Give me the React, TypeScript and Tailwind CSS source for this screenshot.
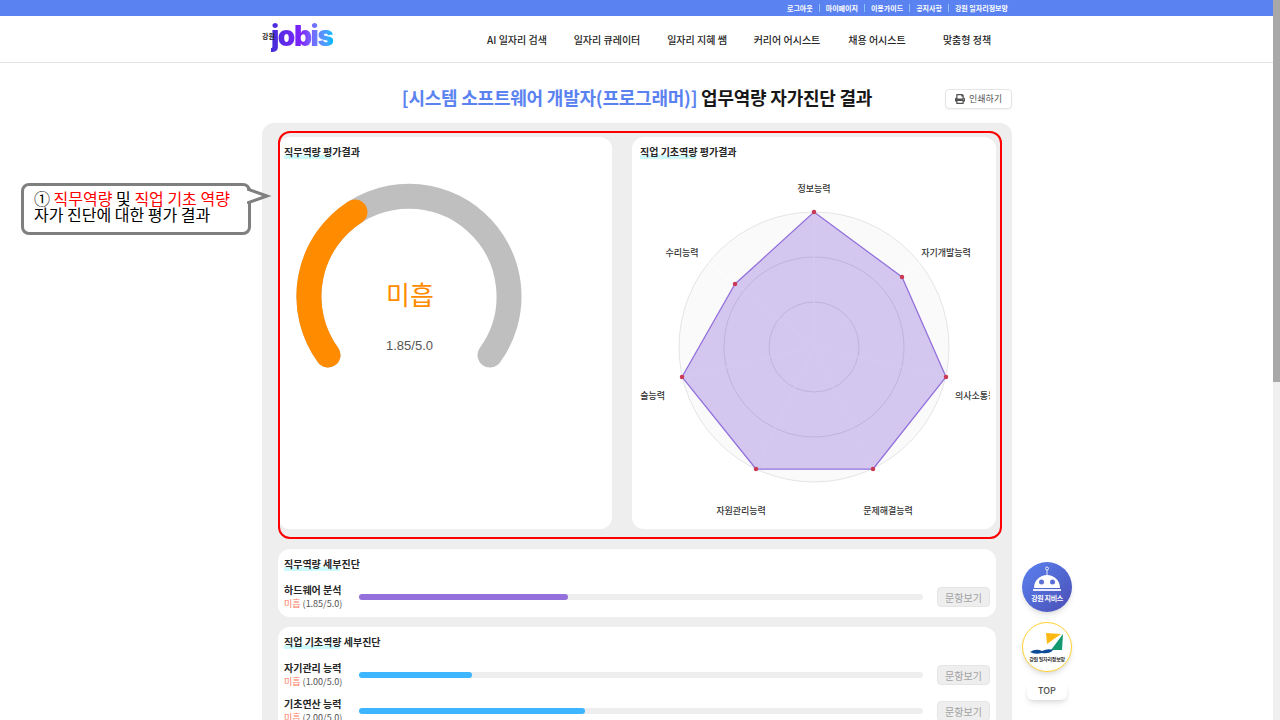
import { FaPrint } from "react-icons/fa";

const topLinks = ["로그아웃", "마이페이지", "이용가이드", "공지사항", "강원 일자리정보망"];
const navItems = ["AI 일자리 검색", "일자리 큐레이터", "일자리 지혜 쌤", "커리어 어시스트", "채용 어시스트", "맞춤형 정책"];

const radarPoints = [
  [814, 212],
  [902, 277],
  [946, 377],
  [873, 469],
  [756, 469],
  [682, 377],
  [735, 284],
];

const radarLabels = [
  { text: "정보능력", x: 814, y: 189, anchor: "middle" },
  { text: "자기개발능력", x: 946, y: 253, anchor: "middle" },
  { text: "의사소통능력", x: 955, y: 396, anchor: "start" },
  { text: "문제해결능력", x: 888, y: 511, anchor: "middle" },
  { text: "자원관리능력", x: 741, y: 511, anchor: "middle" },
  { text: "기술능력", x: 665, y: 396, anchor: "end" },
  { text: "수리능력", x: 682, y: 253, anchor: "middle" },
];

// 7 axes around the centre of the radar chart
const axisEnds = Array.from({ length: 7 }, (_, i) => {
  const a = (i * 2 * Math.PI) / 7;
  return [814 + 135 * Math.sin(a), 347 - 135 * Math.cos(a)];
});

function SectionTitle({ children, mark }: { children: string; mark: string }) {
  return (
    <h3 className="relative h-3.5 text-[10px] leading-3.5 font-bold text-neutral-800">
      <span className={`absolute bottom-0 left-0 h-1 bg-cyan-100 ${mark}`} />
      <span className="relative">{children}</span>
    </h3>
  );
}

function ScoreRow({ name, score, percent, color }: { name: string; score: string; percent: number; color: string }) {
  return (
    <div className="flex items-center">
      <div className="w-[75px] shrink-0">
        <p className="text-[10px] leading-3.5 font-bold text-neutral-800">{name}</p>
        <p className="text-[9px] leading-3.5 text-neutral-600">
          <span className="text-[#ff7a5c]">미흡</span> ({score})
        </p>
      </div>
      <div className="h-1.5 flex-1 rounded-full bg-[#eeeeee]">
        <div className={`h-full rounded-full ${color}`} style={{ width: `${percent}%` }} />
      </div>
      <button className="ml-3.5 h-5 w-[53px] shrink-0 rounded-sm border border-neutral-200 bg-[#eeeeee] text-[10px] text-neutral-400">
        문항보기
      </button>
    </div>
  );
}

function Gauge() {
  return (
    <svg viewBox="0 0 226 186" className="mt-6 ml-3 h-[186px] w-[226px]">
      <path d="M32 172 A100 100 0 1 1 194 172" fill="none" stroke="#bfbfbf" strokeWidth="25" strokeLinecap="round" />
      <path d="M32 172 A100 100 0 0 1 59 29" fill="none" stroke="#ff8c00" strokeWidth="25" strokeLinecap="round" />
      <text x="114" y="122" textAnchor="middle" fontSize="26" fill="#ff8c00">
        미흡
      </text>
      <text x="113.5" y="167" textAnchor="middle" fontSize="13" fill="#555555" fontFamily="'Liberation Sans', sans-serif">
        1.85/5.0
      </text>
    </svg>
  );
}

function Radar() {
  return (
    <svg viewBox="640 171 350 350" className="mt-3 h-[350px] w-[350px]">
      <circle cx="814" cy="347" r="135" fill="#fafafa" stroke="#e5e5e5" />
      <circle cx="814" cy="347" r="90" fill="none" stroke="#dcdcdc" />
      <circle cx="814" cy="347" r="45" fill="none" stroke="#dcdcdc" />
      {axisEnds.map(([x, y]) => (
        <line key={x} x1="814" y1="347" x2={x} y2={y} stroke="#ffffff" />
      ))}
      <polygon
        points={radarPoints.map((p) => p.join(",")).join(" ")}
        fill="#9370db"
        fillOpacity="0.37"
        stroke="#9370db"
        strokeWidth="1.25"
      />
      {radarPoints.map(([x, y]) => (
        <circle key={x} cx={x} cy={y} r="2.25" fill="#c93a55" />
      ))}
      {radarLabels.map((l) => (
        <text
          key={l.text}
          x={l.x}
          y={l.y + 3}
          textAnchor={l.anchor as "middle" | "start" | "end"}
          fontSize="9"
          fontWeight="500"
          fill="#333333"
        >
          {l.text}
        </text>
      ))}
    </svg>
  );
}

function Callout() {
  return (
    <div className="absolute top-[183px] left-[21px] h-[52px] w-[230px] rounded-lg border-[3px] border-[#7f7f7f] bg-white pt-1 pl-2.5 text-base leading-4 text-black">
      <svg viewBox="0 0 26 18" className="absolute top-0 -right-[25px] h-[18px] w-[26px]">
        <path d="M0 3 L20 10 L0 17" fill="#ffffff" stroke="#7f7f7f" strokeWidth="3" />
      </svg>
      <p>
        ① <span className="text-[#ff0000]">직무역량</span> 및 <span className="text-[#ff0000]">직업 기초 역량</span>
      </p>
      <p>자가 진단에 대한 평가 결과</p>
    </div>
  );
}

function FloatingMenu() {
  return (
    <div className="absolute top-[562px] left-[1022px] flex w-[50px] flex-col items-center gap-2.5">
      <div className="flex size-[50px] flex-col items-center rounded-full bg-gradient-to-br from-[#5a82f0] to-[#4a4fb5] pt-1 shadow-md">
        <svg viewBox="0 0 34 26" className="h-[26px] w-[34px]">
          <circle cx="17" cy="2.5" r="1.5" fill="none" stroke="#e8ecff" />
          <line x1="17" y1="4" x2="17" y2="9" stroke="#e8ecff" />
          <path d="M4 22 A13 13 0 0 1 30 22 Z" fill="#ffffff" />
          <rect x="3" y="23" width="28" height="2" fill="#e8ecff" />
          <circle cx="11.5" cy="16" r="2.5" fill="#5a6fd8" />
          <circle cx="22.5" cy="16" r="2.5" fill="#5a6fd8" />
        </svg>
        <span className="text-[7px] leading-3 font-bold tracking-tighter text-white">강원 지비스</span>
      </div>
      <div className="flex size-[50px] flex-col items-center rounded-full border border-amber-300 bg-white pt-1.5 shadow-md">
        <svg viewBox="0 0 38 26" className="h-[26px] w-[38px]">
          <path d="M18 4 L33 5 L19 15 Z" fill="#fdb913" />
          <path d="M35 5 L34 21 L23 21 Z" fill="#12996f" />
          <path d="M2 23 Q8 19 14 22 Q20 19 25 21 Q22 25 14 24 Q7 26 2 23 Z" fill="#0b4a96" />
        </svg>
        <span className="text-[5px] leading-2 font-medium tracking-tighter text-black">강원 일자리정보망</span>
      </div>
      <div className="flex h-[18px] w-10 items-center justify-center rounded-md bg-white text-[9px] font-medium text-neutral-600 shadow-md">
        TOP
      </div>
    </div>
  );
}

export default function App() {
  return (
    <div className="relative flex h-screen overflow-hidden bg-white font-['Noto_Sans_CJK_KR','Noto_Sans',sans-serif]">
      <div className="flex-1">
        <div className="h-4 bg-[#5a82f0]">
          <ul className="ml-[262px] flex h-full w-[750px] items-center justify-end pr-1 text-[7px] font-bold text-white">
            {topLinks.map((link, i) => (
              <li key={link} className={i > 0 ? "ml-1.5 border-l border-blue-300 pl-1.5 leading-2" : "leading-2"}>
                {link}
              </li>
            ))}
          </ul>
        </div>

        <header className="h-[47px] border-b border-neutral-200">
          <div className="ml-[262px] flex h-full w-[750px] items-center justify-between">
            <div className="flex items-center pb-1.5">
              <span className="relative z-10 text-[7px] font-bold text-neutral-800">강원</span>
              <span className="-ml-1 bg-gradient-to-r from-indigo-700 via-violet-600 to-sky-400 bg-clip-text font-['Inter',sans-serif] text-[28px] leading-8 font-black tracking-tighter text-transparent">
                jobis
              </span>
            </div>
            <nav className="grid w-[540px] grid-cols-6 text-center text-[10px] font-medium text-neutral-800">
              {navItems.map((item) => (
                <a key={item}>{item}</a>
              ))}
            </nav>
          </div>
        </header>

        <main className="ml-[262px] w-[750px]">
          <div className="mt-6 mb-3 grid h-6 grid-cols-[1fr_auto_1fr] items-center">
            <span />
            <h1 className="-translate-y-0.5 text-lg leading-6 font-bold tracking-[-0.0125em] whitespace-nowrap text-neutral-900">
              <span className="text-[#5a82f0]">[시스템 소프트웨어 개발자(프로그래머)]</span> 업무역량 자가진단 결과
            </h1>
            <button className="flex h-5 w-[67px] items-center justify-center gap-1 justify-self-end rounded-sm border border-neutral-200 bg-white text-[9px] text-neutral-600 shadow-xs">
              <FaPrint className="size-2.5" />
              인쇄하기
            </button>
          </div>

          <section className="rounded-t-xl bg-[#eeeeee] px-4 pt-3.5 pb-4">
            <div className="mb-5 flex gap-5">
              <div className="h-98 flex-1 rounded-xl bg-white px-1.5 pt-2">
                <SectionTitle mark="w-12">직무역량 평가결과</SectionTitle>
                <Gauge />
              </div>
              <div className="h-98 w-[364px] rounded-xl bg-white px-2 pt-2">
                <SectionTitle mark="w-14">직업 기초역량 평가결과</SectionTitle>
                <Radar />
              </div>
            </div>

            <div className="flex flex-col gap-2.5">
              <div className="rounded-xl bg-white px-1.5 pt-2 pb-1.5">
                <SectionTitle mark="w-14">직무역량 세부진단</SectionTitle>
                <div className="mt-3">
                  <ScoreRow name="하드웨어 분석" score="1.85/5.0" percent={37} color="bg-[#9370db]" />
                </div>
              </div>
              <div className="rounded-xl bg-white px-1.5 pt-2 pb-1.5">
                <SectionTitle mark="w-14">직업 기초역량 세부진단</SectionTitle>
                <div className="mt-3 flex flex-col gap-2">
                  <ScoreRow name="자기관리 능력" score="1.00/5.0" percent={20} color="bg-[#3db5ff]" />
                  <ScoreRow name="기초연산 능력" score="2.00/5.0" percent={40} color="bg-[#3db5ff]" />
                </div>
              </div>
            </div>
          </section>
        </main>
      </div>

      <div className="w-[7px] shrink-0 bg-[#f0f0f0]">
        <div className="h-[382px] bg-[#a8a8a8]" />
      </div>

      <div className="absolute top-[131px] left-[278px] h-[408px] w-[724px] rounded-xl border-2 border-[#ff0000]" />
      <Callout />
      <FloatingMenu />
    </div>
  );
}
